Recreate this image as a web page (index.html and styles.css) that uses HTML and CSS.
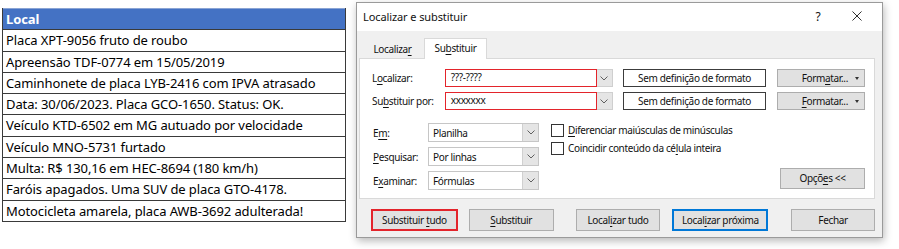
FILE: index.html
```html
<!DOCTYPE html>
<html lang="pt">
<head>
<meta charset="utf-8">
<title>Localizar e substituir</title>
<link rel="stylesheet" href="styles.css">
</head>
<body>
<div class="page">
  <div class="sheet">
    <div class="cell head">Local</div>
    <div class="cell">Placa XPT-9056 fruto de roubo</div>
    <div class="cell">Apreensão TDF-0774 em 15/05/2019</div>
    <div class="cell">Caminhonete de placa LYB-2416 com IPVA atrasado</div>
    <div class="cell">Data: 30/06/2023. Placa GCO-1650. Status: OK.</div>
    <div class="cell">Veículo KTD-6502 em MG autuado por velocidade</div>
    <div class="cell">Veículo MNO-5731 furtado</div>
    <div class="cell">Multa: R$ 130,16 em HEC-8694 (180 km/h)</div>
    <div class="cell">Faróis apagados. Uma SUV de placa GTO-4178.</div>
    <div class="cell">Motocicleta amarela, placa AWB-3692 adulterada!</div>
  </div>

  <div class="dialog">
    <div class="titlebar">
      <span class="title">Localizar e substituir</span>
      <span class="help">?</span>
      <span class="close"><svg width="11" height="11" viewBox="0 0 11 11"><path d="M0.5 0.5L10.5 10.5M10.5 0.5L0.5 10.5" stroke="#1a1a1a" stroke-width="1" fill="none"/></svg></span>
    </div>
    <div class="body">
      <div class="tabs">
        <div class="tab">Localiza<u>r</u></div>
        <div class="tab active">Su<u>b</u>stituir</div>
      </div>
      <div class="panel">
        <div class="find-row">
          <span class="lbl">L<u>o</u>calizar:</span>
          <div class="combo">
            <div class="input red">???-????</div>
            <div class="drop"><svg width="8" height="5" viewBox="0 0 8 5"><path d="M0.5 0.5L4 4L7.5 0.5" stroke="#606060" fill="none"/></svg></div>
          </div>
          <div class="fmtbox">Sem definição de formato</div>
          <div class="btn fmtbtn">Form<u>a</u>tar...<span class="caret"></span></div>
        </div>
        <div class="find-row second">
          <span class="lbl">Su<u>b</u>stituir por:</span>
          <div class="combo">
            <div class="input red">xxxxxxx</div>
            <div class="drop"><svg width="8" height="5" viewBox="0 0 8 5"><path d="M0.5 0.5L4 4L7.5 0.5" stroke="#606060" fill="none"/></svg></div>
          </div>
          <div class="fmtbox">Sem definição de formato</div>
          <div class="btn fmtbtn"><u>F</u>ormatar...<span class="caret"></span></div>
        </div>

        <div class="opts">
          <div class="selects">
            <div class="sel-row">
              <span class="slbl">E<u>m</u>:</span>
              <div class="select"><span>Planilha</span><div class="sdrop"><svg width="8" height="5" viewBox="0 0 8 5"><path d="M0.5 0.5L4 4L7.5 0.5" stroke="#606060" fill="none"/></svg></div></div>
            </div>
            <div class="sel-row">
              <span class="slbl"><u>P</u>esquisar:</span>
              <div class="select"><span>Por linhas</span><div class="sdrop"><svg width="8" height="5" viewBox="0 0 8 5"><path d="M0.5 0.5L4 4L7.5 0.5" stroke="#606060" fill="none"/></svg></div></div>
            </div>
            <div class="sel-row">
              <span class="slbl">E<u>x</u>aminar:</span>
              <div class="select"><span>Fórmulas</span><div class="sdrop"><svg width="8" height="5" viewBox="0 0 8 5"><path d="M0.5 0.5L4 4L7.5 0.5" stroke="#606060" fill="none"/></svg></div></div>
            </div>
          </div>
          <div class="checks">
            <div class="chk-row"><span class="box"></span><span><u>D</u>iferenciar maiúsculas de minúsculas</span></div>
            <div class="chk-row"><span class="box"></span><span>Coincidir conteúdo da cé<u>l</u>ula inteira</span></div>
          </div>
          <div class="btn optbtn">Opçõ<u>e</u>s &lt;&lt;</div>
        </div>
      </div>
      <div class="actions">
        <div class="btn act red-btn">Substituir <u>t</u>udo</div>
        <div class="btn act"><u>S</u>ubstituir</div>
        <div class="btn act">Local<u>i</u>zar tudo</div>
        <div class="btn act blue-btn">Local<u>i</u>zar próxima</div>
        <div class="btn act">Fechar</div>
      </div>
    </div>
  </div>
</div>
</body>
</html>
```

FILE: styles.css
```css
* { box-sizing: border-box; }
html, body { margin: 0; padding: 0; background: #ffffff; }
body { width: 899px; height: 249px; overflow: hidden; }
u { text-decoration: underline; text-underline-offset: 1.5px; text-decoration-thickness: 1px; }

.page {
  display: flex;
  align-items: flex-start;
  font-family: "Noto Sans", "Open Sans", sans-serif;
  color: #1a1a1a;
}

/* spreadsheet */
.sheet {
  margin: 8px 0 0 2px;
  width: 344px;
  border: 1px solid #3a3a3a;
  border-top: none;
  display: flex;
  flex-direction: column;
}
.cell {
  height: 21.3px;
  font-size: 13px;
  letter-spacing: -0.1px;
  line-height: 20px;
  padding-left: 3px;
  border-top: 1px solid #3a3a3a;
  white-space: nowrap;
  color: #000;
}
.cell.head {
  background: #4472c4;
  color: #fff;
  font-weight: bold;
  border-top: 1px solid #8aa4d4;
}

/* dialog */
.dialog {
  margin: 2px 0 0 10px;
  width: 527px;
  height: 236px;
  border: 1px solid #9a9a9a;
  background: #f0f0f0;
  box-shadow: 1px 3px 8px rgba(0,0,0,0.28);
  display: flex;
  flex-direction: column;
  font-size: 10px;
  letter-spacing: -0.35px;
  color: #111;
}
.titlebar {
  height: 28px;
  background: #ffffff;
  display: flex;
  align-items: center;
  padding-left: 6px;
}
.title { font-size: 11px; letter-spacing: -0.1px; flex: 1; margin-top: -2px; }
.help { width: 16px; font-size: 12px; margin-right: 26px; text-align: center; margin-top: -2px; }
.close { width: 10px; height: 10px; display: flex; margin-right: 20px; margin-top: -2px; }
.close svg { width: 10px; height: 10px; }

.body {
  flex: 1;
  display: flex;
  flex-direction: column;
  padding: 7px 7px 0 2px;
}
.tabs { display: flex; height: 20px; padding-left: 2px; }
.tab {
  width: 63px;
  text-align: center;
  line-height: 23px;
}
.tab.active {
  background: #ffffff;
  border: 1px solid #d9d9d9;
  border-bottom: none;
  line-height: 18px;
  position: relative;
  z-index: 1;
  height: 21px;
}
.panel {
  height: 141px;
  background: #ffffff;
  border: 1px solid #d9d9d9;
  padding: 10px 9px 0 12px;
  display: flex;
  flex-direction: column;
}
.find-row { display: flex; align-items: center; height: 18px; }
.find-row.second { margin-top: 5px; }
.lbl { width: 73px; white-space: nowrap; }
.combo { display: flex; height: 18px; }
.input {
  width: 152px;
  height: 18px;
  border: 1.5px solid #e3242b;
  padding-left: 5px;
  line-height: 15px;
  background: #fff;
}
.drop {
  width: 16px;
  height: 18px;
  background: #e5e5e5;
  border: 1px solid #cfcfcf;
  border-left: none;
  display: flex;
  align-items: center;
  justify-content: center;
}
.fmtbox {
  margin-left: 10px;
  width: 144px;
  height: 18px;
  border: 1px solid #3c3c3c;
  text-align: center;
  line-height: 16px;
  white-space: nowrap;
}
.btn {
  background: #e1e1e1;
  border: 1px solid #adadad;
  text-align: center;
  white-space: nowrap;
}
.fmtbtn {
  margin-left: 11px;
  width: 88px;
  height: 18px;
  line-height: 16px;
  position: relative;
  padding-right: 16px;
  text-align: right;
}
.caret {
  position: absolute;
  right: 5px;
  top: 7px;
  width: 0; height: 0;
  border-left: 2.5px solid transparent;
  border-right: 2.5px solid transparent;
  border-top: 3px solid #333;
}

.opts { display: flex; margin-top: 13px; }
.selects { display: flex; flex-direction: column; gap: 5px; }
.sel-row { display: flex; align-items: center; height: 19px; }
.slbl { width: 56px; padding-left: 1px; }
.select {
  width: 111px;
  height: 19px;
  border: 1px solid #c6c6c6;
  display: flex;
  align-items: center;
  padding-left: 4px;
  background: #fff;
}
.select span { flex: 1; }
.sdrop {
  width: 16px;
  height: 17px;
  background: #e5e5e5;
  border-left: 1px solid #d0d0d0;
  display: flex;
  align-items: center;
  justify-content: center;
}
.checks { margin-left: 12px; display: flex; flex-direction: column; gap: 4px; }
.chk-row { display: flex; align-items: center; height: 14px; gap: 4px; }
.box { width: 13px; height: 13px; border: 1px solid #333; background: #fff; }
.optbtn {
  margin-left: auto;
  align-self: flex-end;
  width: 85px;
  height: 21px;
  line-height: 19px;
  margin-bottom: 1px;
}

.actions { display: flex; margin-top: 10px; padding-left: 12px; }
.act { height: 22px; line-height: 20px; }
.act:nth-child(1) { width: 87px; }
.act:nth-child(2) { width: 85px; margin-left: 11px; }
.act:nth-child(3) { width: 85px; margin-left: 22px; }
.act:nth-child(4) { width: 96px; margin-left: 12px; }
.act:nth-child(5) { width: 84px; margin-left: 23px; }
.red-btn { border: 2px solid #e3242b; line-height: 18px; }
.blue-btn { border: 2px solid #0078d7; line-height: 18px; }
```
